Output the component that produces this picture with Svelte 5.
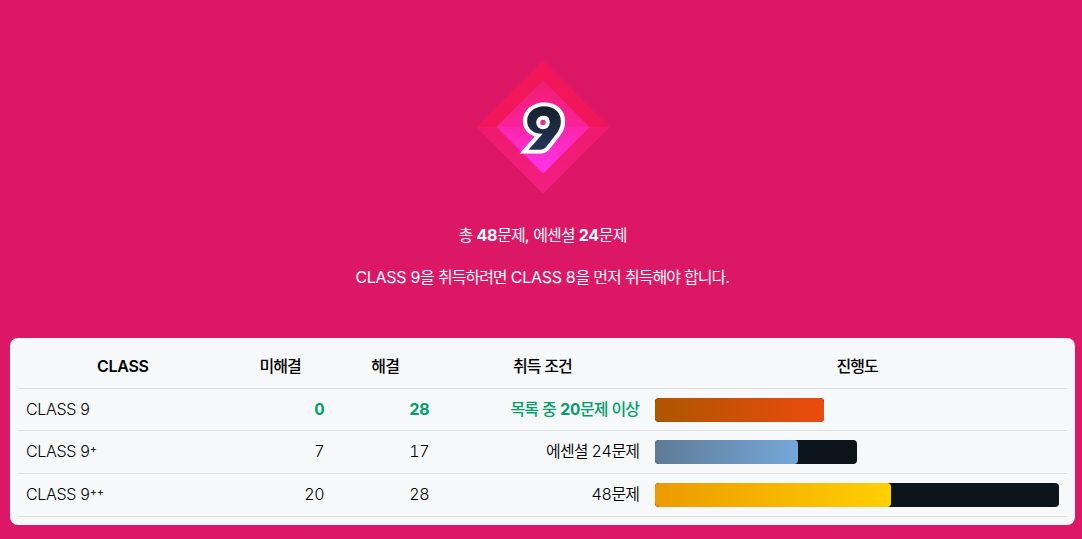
<script lang="ts">
  interface Fila {
    nivel: number;
    plus: string;
    restantes: number;
    resueltos: number;
    condicion: string;
    necesarios: number;
    color: string;
  }

  const TOTAL = 48;

  const filas: Fila[] = [
    { nivel: 9, plus: "", restantes: 0, resueltos: 28, condicion: "목록 중 20문제 이상", necesarios: 20, color: "bronce" },
    { nivel: 9, plus: "+", restantes: 7, resueltos: 17, condicion: "에센셜 24문제", necesarios: 24, color: "plata" },
    { nivel: 9, plus: "++", restantes: 20, resueltos: 28, condicion: "48문제", necesarios: 48, color: "oro" },
  ];

  // separa el hangul del resto para darle su propio espaciado
  function partes(cadena: string) {
    return cadena.split(/([가-힣]+)/).filter((p) => p !== "");
  }

  function esHangul(parte: string) {
    return /[가-힣]/.test(parte);
  }

  function anchoBarra(fila: Fila) {
    return (fila.necesarios / TOTAL) * 100;
  }

  function anchoProgreso(fila: Fila) {
    return Math.min(1, fila.resueltos / fila.necesarios) * 100;
  }
</script>

{#snippet texto(cadena: string)}
  {#each partes(cadena) as parte}<span class:hangul={esHangul(parte)}>{parte}</span>{/each}
{/snippet}

<div class="pagina">
  <div class="portada">
    <svg class="insignia" width="134" height="134" viewBox="0 0 134 134">
      <defs>
        <linearGradient id="fondo" x1="0" y1="0" x2="0" y2="1">
          <stop offset="0" stop-color="#f21658" />
          <stop offset="0.5" stop-color="#f1165b" />
          <stop offset="0.5" stop-color="#ef1a6c" />
          <stop offset="1" stop-color="#f41e84" />
        </linearGradient>
        <linearGradient id="centro" x1="0" y1="0" x2="0" y2="1">
          <stop offset="0" stop-color="#ee1d73" />
          <stop offset="0.5" stop-color="#fa229c" />
          <stop offset="0.5" stop-color="#fb25a8" />
          <stop offset="1" stop-color="#ff35f0" />
        </linearGradient>
        <linearGradient id="numero" gradientUnits="userSpaceOnUse" x1="0" y1="-42" x2="0" y2="0">
          <stop offset="0" stop-color="#15202b" />
          <stop offset="1" stop-color="#243458" />
        </linearGradient>
      </defs>
      <path d="M67 0.5 133.5 67 67 133.5 0.5 67Z" fill="url(#fondo)" />
      <path d="M67 20.5 113.5 67 67 113.5 20.5 67Z" fill="url(#centro)" />
      <g class="cifra" transform="translate(68.4 88) scale(1.1 1)">
        <text class="borde" text-anchor="middle">9</text>
        <text class="relleno" text-anchor="middle">9</text>
      </g>
      <circle cx="67" cy="62.5" r="6.8" fill="#fff" />
      <circle cx="67" cy="62.5" r="2.7" fill="#f8208f" />
    </svg>
    <p class="resumen">
      {@render texto("총 ")}<b>48</b>{@render texto("문제, 에센셜 ")}<b>24</b>{@render texto("문제")}
    </p>
    <p class="aviso">{@render texto("CLASS 9을 취득하려면 CLASS 8을 먼저 취득해야 합니다.")}</p>
  </div>

  <div class="tarjeta">
    <table>
      <colgroup>
        <col style="width: 20%" />
        <col style="width: 10%" />
        <col style="width: 10%" />
        <col style="width: 20%" />
        <col style="width: 40%" />
      </colgroup>
      <thead>
        <tr>
          <th>CLASS</th>
          <th>{@render texto("미해결")}</th>
          <th>{@render texto("해결")}</th>
          <th>{@render texto("취득 조건")}</th>
          <th>{@render texto("진행도")}</th>
        </tr>
      </thead>
      <tbody>
        {#each filas as fila}
          <tr class:logrado={fila.restantes === 0}>
            <td class="nombre">CLASS {fila.nivel}<span class="plus">{fila.plus}</span></td>
            <td class="dato">{fila.restantes}</td>
            <td class="dato">{fila.resueltos}</td>
            <td class="dato">{@render texto(fila.condicion)}</td>
            <td>
              <div class="barra" style="width: {anchoBarra(fila)}%">
                <div class="progreso {fila.color}" style="width: {anchoProgreso(fila)}%"></div>
              </div>
            </td>
          </tr>
        {/each}
      </tbody>
    </table>
  </div>
</div>

<style>
  .pagina {
    box-sizing: border-box;
    height: 539px;
    padding: 60px 7px 0 10px;
    overflow: hidden;
    background: #dc1866;
    font-family: Inter, 'Noto Sans CJK KR', sans-serif;
    font-size: 16px;
    letter-spacing: -0.3px;
  }

  .portada {
    display: flex;
    flex-direction: column;
    align-items: center;
    height: 278px;
    color: white;
  }

  .insignia {
    display: block;
  }

  .cifra {
    font-family: Lato, sans-serif;
    font-size: 55px;
    font-weight: 900;
    letter-spacing: 0;
  }

  .borde {
    fill: white;
    stroke: white;
    stroke-width: 11px;
  }

  .relleno {
    fill: url(#numero);
    stroke: url(#numero);
    stroke-width: 3.4px;
  }

  .hangul {
    letter-spacing: -0.95px;
  }

  p {
    margin: 0;
    line-height: 24px;
    white-space: nowrap;
  }

  .resumen {
    margin-top: 29px;
  }

  .aviso {
    margin-top: 18px;
  }

  .aviso .hangul {
    letter-spacing: -1px;
  }

  .tarjeta {
    box-sizing: border-box;
    height: 187px;
    padding: 8px;
    border-radius: 8px;
    background: #f7f8fa;
    color: black;
  }

  table {
    width: 100%;
    table-layout: fixed;
    border-collapse: separate;
    border-spacing: 0;
  }

  th,
  td {
    box-sizing: border-box;
    padding: 0 8px;
    border-bottom: 1px solid #dddfe0;
    line-height: 24px;
    white-space: nowrap;
  }

  th {
    height: 43px;
    padding-bottom: 2px;
    font-weight: 600;
    text-align: center;
  }

  th .hangul {
    font-weight: 500;
  }

  td {
    height: 43px;
    font-weight: 300;
    text-align: left;
  }

  tbody tr:first-child td {
    height: 42px;
  }

  .nombre {
    padding-bottom: 2px;
  }

  .dato {
    padding-right: 8.3px;
    padding-bottom: 2px;
    text-align: right;
    font-variant-numeric: tabular-nums;
  }

  .dato .hangul {
    font-weight: 350;
  }

  .logrado .dato {
    color: #009f6b;
    font-weight: 700;
  }

  .logrado .dato .hangul {
    font-weight: 500;
  }

  .plus {
    position: relative;
    top: -4px;
    font-size: 11px;
    font-weight: 400;
    line-height: 0;
  }

  .barra {
    height: 24px;
    border-radius: 4px;
    background: #0d151c;
    overflow: hidden;
  }

  .progreso {
    height: 100%;
    border-radius: 4px;
  }

  .bronce {
    background: linear-gradient(to right, #ad5600, #ec4b0d);
  }

  .plata {
    background: linear-gradient(to right, #5e7b96, #75a7d9);
  }

  .oro {
    background: linear-gradient(to right, #ec9a00, #ffd000);
  }
</style>
